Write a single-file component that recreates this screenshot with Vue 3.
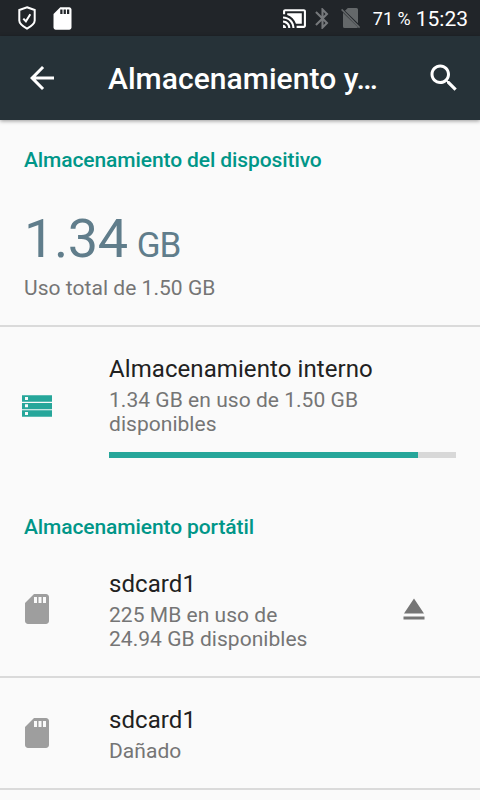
<script setup>
import { h } from 'vue'

const SD = 'M18 2h-8L4.02 8 4 20c0 1.1.9 2 2 2h12c1.1 0 2-.9 2-2V4c0-1.1-.9-2-2-2zm-6 6h-2V4h2v4zm3 0h-2V4h2v4zm3 0h-2V4h2v4z'
const glyphs = {
  sd: SD,
  back: 'M20 11H7.83l5.59-5.59L12 4l-8 8 8 8 1.41-1.41L7.83 13H20v-2z',
  search: 'M15.5 14h-.79l-.28-.27C15.41 12.59 16 11.11 16 9.5 16 5.91 13.09 3 9.5 3S3 5.91 3 9.5 5.91 16 9.5 16c1.61 0 3.09-.59 4.23-1.57l.27.28v.79l5 4.99L20.49 19l-4.99-5zm-6 0C7.01 14 5 11.99 5 9.5S7.01 5 9.5 5 14 7.01 14 9.5 11.99 14 9.5 14z',
  cast: 'M1 18v3h3c0-1.66-1.34-3-3-3zm0-4v2c2.76 0 5 2.24 5 5h2c0-3.87-3.13-7-7-7zm18-7H5v1.63c3.96 1.28 7.09 4.41 8.37 8.37H19V7zM1 10v2c4.97 0 9 4.03 9 9h2c0-6.08-4.93-11-11-11zm20-7H3c-1.1 0-2 .9-2 2v3h2V5h18v14h-7v2h7c1.1 0 2-.9 2-2V5c0-1.1-.9-2-2-2z',
  bluetooth: 'M17.71 7.71L12 2h-1v7.59L6.41 5 5 6.41 10.59 12 5 17.59 6.41 19 11 14.41V22h1l5.71-5.71-4.3-4.29 4.3-4.29zM13 5.83l1.88 1.88L13 9.59V5.83zm1.88 10.46L13 18.17v-3.76l1.88 1.88z',
  eject: 'M5 17h14v2H5zm7-12L5.33 15h13.34z',
}
const Glyph = (props) =>
  h('svg', { viewBox: '0 0 24 24', fill: 'currentColor' }, [h('path', { d: glyphs[props.name] })])
Glyph.props = ['name']

const usedPercent = 89
const cards = [
  { name: 'sdcard1', lines: ['225 MB en uso de', '24.94 GB disponibles'], ejectable: true },
  { name: 'sdcard1', lines: ['Dañado'], ejectable: false },
]
</script>

<template>
  <div class="screen">
    <div class="status">
      <svg class="shield" viewBox="0 0 20 26" fill="none" stroke="currentColor">
        <path d="M10 2.200 17.700 5v10.500c0 3-3.200 5.600-7.700 8.200-4.500-2.600-7.700-5.200-7.700-8.200V5z" stroke-width="2" />
        <path d="m6.300 13.600 2.600 2.700 4.400-7" stroke-width="2" />
      </svg>
      <Glyph name="sd" class="status-sd" />
      <span class="spacer"></span>
      <Glyph name="cast" class="cast" />
      <Glyph name="bluetooth" class="bluetooth" />
      <svg class="nosim" viewBox="0 0 20 21">
        <path d="M6.800 0H15.500a1.500 1.500 0 0 1 1.500 1.500V15.200L4 2.700zM2 4.800 17 19.300a1.500 1.500 0 0 1-1.500.7H3.500A1.500 1.500 0 0 1 2 18.500z" fill="#64686a" />
        <path d="M.6 1.400 18.600 19.600" stroke="#64686a" stroke-width="1.500" />
      </svg>
      <span class="battery">71 %</span>
      <span class="clock">15:23</span>
    </div>

    <header class="bar">
      <Glyph name="back" class="icon" />
      <h1>Almacenamiento y…</h1>
      <Glyph name="search" class="icon" />
    </header>

    <main>
      <section class="summary">
        <h2>Almacenamiento del dispositivo</h2>
        <div class="total"><span class="value">1.34</span><span class="unit">GB</span></div>
        <p>Uso total de 1.50 GB</p>
      </section>

      <div class="row internal">
        <svg class="storage" viewBox="0 0 30 22">
          <path d="M0 .3h30v6.400H0zM0 8h30v6.300H0zM0 15.300h30v6.400H0z" fill="#26a69a" />
          <path d="M3 2h3v3H3zM3 9.300h3v3H3zM3 17h3v3H3z" fill="#fafafa" />
        </svg>
        <div class="text">
          <h3>Almacenamiento interno</h3>
          <p>1.34 GB en uso de 1.50 GB<br />disponibles</p>
          <div class="track"><div class="fill" :style="{ width: usedPercent + '%' }"></div></div>
        </div>
      </div>

      <h2 class="portable">Almacenamiento portátil</h2>
      <div v-for="(card, i) in cards" :key="i" class="row card">
        <Glyph name="sd" class="icon sd" />
        <div class="text">
          <h3>{{ card.name }}</h3>
          <p><template v-for="(line, n) in card.lines" :key="n"><br v-if="n" />{{ line }}</template></p>
        </div>
        <Glyph v-if="card.ejectable" name="eject" class="icon eject" />
      </div>
    </main>
  </div>
</template>

<style>
body {
  margin: 0;
  background: #fafafa;
}
</style>

<style scoped>
.screen {
  width: 480px;
  height: 800px;
  overflow: hidden;
  background: #fafafa;
  font-family: Roboto, "Liberation Sans", sans-serif;
  color: #212121;
}
h1, h2, h3, p {
  margin: 0;
  font-weight: 400;
  white-space: nowrap;
}
svg {
  display: block;
  flex: none;
}
.status {
  display: flex;
  align-items: center;
  height: 36px;
  box-sizing: border-box;
  padding: 0 12px 0 17px;
  background: #212529;
  color: #fff;
}
.shield {
  width: 20px;
  height: 26px;
}
.status-sd {
  width: 27px;
  height: 27px;
  margin-left: 12px;
}
.spacer {
  flex: 1;
}
.cast {
  width: 25px;
  height: 25px;
}
.bluetooth {
  width: 25px;
  height: 25px;
  margin-left: 3px;
  color: #76797c;
}
.nosim {
  width: 20px;
  height: 21px;
  margin: 0 12px 0 6px;
}
.battery {
  padding-top: 2px;
  font-size: 18px;
  line-height: 36px;
}
.clock {
  padding-top: 2px;
  margin-left: 5px;
  font-size: 21px;
  line-height: 36px;
}
.icon {
  width: 36px;
  height: 36px;
}
.bar {
  position: relative;
  display: flex;
  align-items: center;
  height: 84px;
  box-sizing: border-box;
  padding: 0 18px 0 24px;
  background: #263238;
  color: #fff;
  box-shadow: 0 1px 4px rgba(0, 0, 0, 0.4);
}
.bar h1 {
  flex: 1;
  padding-top: 2px;
  margin-left: 48px;
  font-size: 30px;
  line-height: 36px;
  font-weight: 500;
  letter-spacing: 0.04px;
}
h2 {
  font-size: 21px;
  line-height: 24px;
  font-weight: 500;
  letter-spacing: -0.1px;
  color: #009688;
}
p {
  font-size: 21px;
  line-height: 24px;
  letter-spacing: 0.04px;
  color: #757575;
}
h3 {
  font-size: 24px;
  line-height: 28px;
  margin-bottom: 5px;
  letter-spacing: 0.08px;
}
.summary {
  height: 207px;
  box-sizing: border-box;
  padding: 28px 24px 0;
  border-bottom: 2px solid #dadada;
}
.total {
  display: flex;
  align-items: baseline;
  height: 64px;
  margin: 35px 0 5px;
  line-height: 64px;
  color: #607d8b;
}
.value {
  font-size: 54px;
  letter-spacing: -0.4px;
}
.unit {
  margin-left: 9px;
  font-size: 35px;
  letter-spacing: -1px;
}
.row {
  display: flex;
  padding: 0 24px;
}
.internal {
  padding: 28px 24px 0 22px;
}
.storage {
  width: 30px;
  height: 22px;
  margin: 40px 57px 0 0;
}
.text {
  flex: 1;
}
.track {
  height: 6px;
  margin-top: 16px;
  background: #d8d8d8;
}
.fill {
  height: 100%;
  background: #26a69a;
}
.portable {
  margin: 57px 24px 0;
}
.card {
  box-sizing: border-box;
  padding: 28px 48px 25px 19px;
  border-bottom: 2px solid #dadada;
}
.portable + .card {
  padding-top: 31px;
}
.sd {
  margin: 21px 54px 0 0;
  color: #9e9e9e;
}
.card + .card .sd {
  margin-top: 9px;
}
.eject {
  margin-top: 21px;
  color: #757575;
}
</style>
